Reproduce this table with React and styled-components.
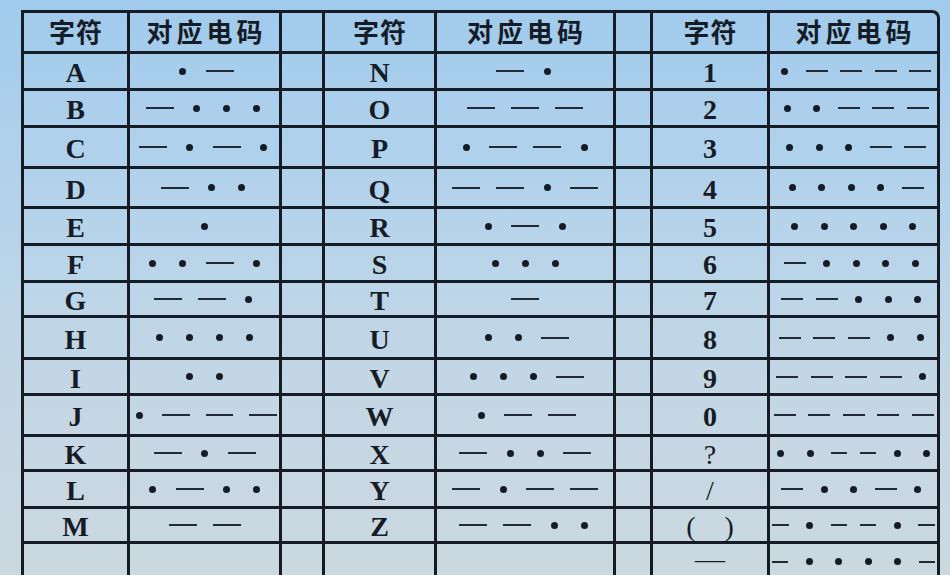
import React from "react";
import styled, { createGlobalStyle } from "styled-components";

const INK = "#161c26";

const GlobalStyle = createGlobalStyle`
  * { box-sizing: border-box; }
  html, body {
    margin: 0;
    width: 950px;
    height: 575px;
    overflow: hidden;
  }
  body {
    background: linear-gradient(180deg, #a0caec 0%, #afd1ec 25%, #bcd5e8 50%, #c6d7e3 75%, #cbd8e0 100%);
    font-family: "Liberation Serif", "Noto Sans CJK SC", serif;
    color: ${INK};
  }
`;

const Page = styled.div`
  padding: 10px 0 0 21px;
`;

const Table = styled.table`
  width: 919px;
  table-layout: fixed;
  border-collapse: separate;
  border-spacing: 0;
  border: 3px solid ${INK};
  border-bottom: none;
  border-radius: 0 8px 0 0;
`;

const Cell = styled.td`
  width: ${p => p.$w}px;
  height: ${p => p.$h}px;
  padding: ${p => (p.$open ? "1px 0 0" : "0")};
  border-right: 3px solid ${INK};
  border-bottom: ${p => (p.$open ? "none" : `3px solid ${INK}`)};
  text-align: center;
  vertical-align: ${p => (p.$open ? "top" : "middle")};
  overflow: hidden;
  &:last-child {
    border-right: none;
    border-top-right-radius: 6px;
  }
`;

const HeadText = styled.span`
  font-family: "Noto Sans CJK SC", sans-serif;
  font-weight: 700;
  font-size: 26px;
  letter-spacing: ${p => p.$spacing}px;
  margin-right: -${p => p.$spacing}px;
  line-height: 1;
`;

const CharText = styled.span`
  font-family: "Liberation Serif", serif;
  font-weight: ${p => (p.$light ? 400 : 700)};
  font-size: 28px;
  line-height: 1;
  word-spacing: ${p => (p.$wide ? 22 : 0)}px;
  position: relative;
  top: 2px;
`;

const TailDash = styled.span`
  display: inline-block;
  font-family: "Liberation Serif", serif;
  font-size: 26px;
  line-height: 29px;
  height: 29px;
  transform: scaleX(1.15);
`;

const Morse = styled.div`
  display: flex;
  align-items: center;
  justify-content: center;
  gap: ${p => (p.$compact ? 12.5 : 16)}px;
  width: 100%;
  margin-top: ${p => p.$offset}px;
  padding: 0 2px;
  overflow: hidden;
`;

const Dot = styled.span`
  flex: 0 0 ${p => (p.$compact ? 17 : 14)}px;
  height: 7px;
  display: flex;
  justify-content: center;
  &::before {
    content: "";
    width: 7px;
    height: 7px;
    border-radius: 50%;
    background: ${INK};
  }
`;

const Dash = styled.span`
  flex: 0 1 ${p => (p.$compact ? 22 : 28)}px;
  min-width: 8px;
  height: 2px;
  background: #222a35;
`;

const COLS = [106, 152, 43, 112, 179, 37, 117, 167];
const HEAD_H = 41;
// heights of the body rows, the last one runs off the bottom of the page
const ROW_H = [37, 37, 41, 40, 37, 37, 35, 42, 36, 41, 35, 37, 35, 32];

const groups = [
  [
    ["A", ".-"], ["B", "-..."], ["C", "-.-."], ["D", "-.."], ["E", "."],
    ["F", "..-."], ["G", "--."], ["H", "...."], ["I", ".."], ["J", ".---"],
    ["K", "-.-"], ["L", ".-.."], ["M", "--"], ["", ""]
  ],
  [
    ["N", "-."], ["O", "---"], ["P", ".--."], ["Q", "--.-"], ["R", ".-."],
    ["S", "..."], ["T", "-"], ["U", "..-"], ["V", "...-"], ["W", ".--"],
    ["X", "-..-"], ["Y", "-.--"], ["Z", "--.."], ["", ""]
  ],
  [
    ["1", ".----"], ["2", "..---"], ["3", "...--"], ["4", "....-"], ["5", "....."],
    ["6", "-...."], ["7", "--..."], ["8", "---.."], ["9", "----."], ["0", "-----"],
    ["?", "..--.."], ["/", "-..-."], ["( )", "-.--.-"], ["—", "-....-"]
  ]
];

function Code({ code, compact, offset }) {
  if (!code) return null;
  return (
    <Morse $compact={compact} $offset={offset}>
      {code.split("").map((c, i) =>
        c === "." ? <Dot key={i} $compact={compact} /> : <Dash key={i} $compact={compact} />
      )}
    </Morse>
  );
}

function Char({ value }) {
  if (value === "—") return <TailDash>—</TailDash>;
  const light = value === "?" || value === "/" || value === "( )";
  return (
    <CharText $light={light} $wide={value === "( )"}>
      {value}
    </CharText>
  );
}

export default function App() {
  const rows = groups[0].map((_, i) => groups.map(g => g[i]));
  return (
    <Page>
      <GlobalStyle />
      <Table>
        <tbody>
          <tr>
            {groups.map((g, gi) => (
              <React.Fragment key={gi}>
                <Cell $w={COLS[gi * 3]} $h={HEAD_H}>
                  <HeadText $spacing={1}>字符</HeadText>
                </Cell>
                <Cell $w={COLS[gi * 3 + 1]} $h={HEAD_H}>
                  <HeadText $spacing={4}>对应电码</HeadText>
                </Cell>
                {gi < 2 && <Cell $w={COLS[gi * 3 + 2]} $h={HEAD_H} />}
              </React.Fragment>
            ))}
          </tr>
          {rows.map((row, ri) => {
            const open = ri === rows.length - 1;
            return (
              <tr key={ri}>
                {row.map(([ch, code], gi) => (
                  <React.Fragment key={gi}>
                    <Cell $h={ROW_H[ri]} $open={open}>
                      <Char value={ch} />
                    </Cell>
                    <Cell $h={ROW_H[ri]} $open={open}>
                      <Code code={code} compact={gi === 2} offset={open ? 13 : 0} />
                    </Cell>
                    {gi < 2 && <Cell $h={ROW_H[ri]} $open={open} />}
                  </React.Fragment>
                ))}
              </tr>
            );
          })}
        </tbody>
      </Table>
    </Page>
  );
}
